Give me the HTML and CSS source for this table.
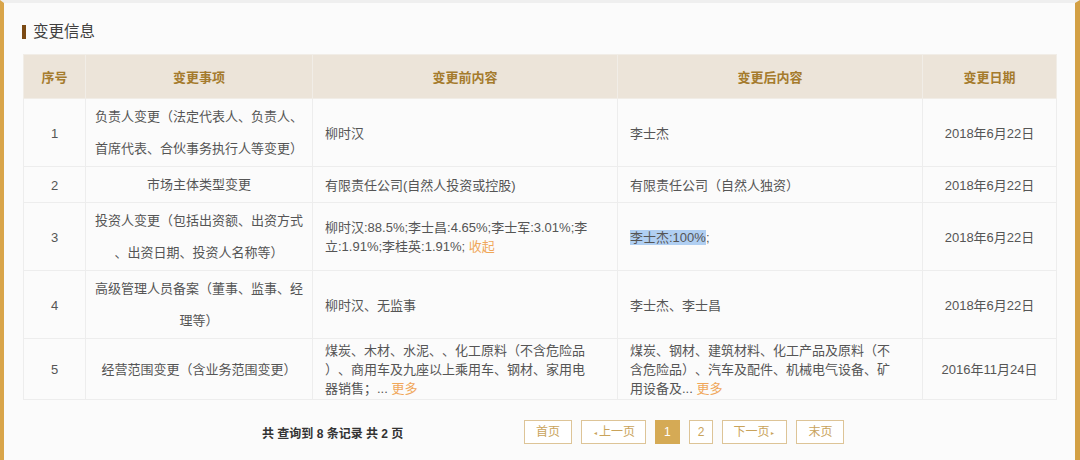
FILE: index.html
```html
<!DOCTYPE html>
<html lang="zh-CN">
<head>
  <meta charset="UTF-8">
  <meta name="viewport" content="width=device-width, initial-scale=1.0">
  <title>变更信息</title>
  <link rel="stylesheet" href="styles.css">
</head>
<body>
  <div class="page">
    <h2 class="title">变更信息</h2>

    <table class="changes">
      <thead>
        <tr>
          <th class="c-no">序号</th>
          <th class="c-item">变更事项</th>
          <th class="c-before">变更前内容</th>
          <th class="c-after">变更后内容</th>
          <th class="c-date">变更日期</th>
        </tr>
      </thead>
      <tbody>
        <tr>
          <td class="c-no">1</td>
          <td class="c-item">负责人变更（法定代表人、负责人、首席代表、合伙事务执行人等变更）</td>
          <td class="c-before">柳时汉</td>
          <td class="c-after">李士杰</td>
          <td class="c-date">2018年6月22日</td>
        </tr>
        <tr>
          <td class="c-no">2</td>
          <td class="c-item">市场主体类型变更</td>
          <td class="c-before">有限责任公司(自然人投资或控股)</td>
          <td class="c-after">有限责任公司（自然人独资）</td>
          <td class="c-date">2018年6月22日</td>
        </tr>
        <tr>
          <td class="c-no">3</td>
          <td class="c-item">投资人变更（包括出资额、出资方式、出资日期、投资人名称等）</td>
          <td class="c-before">柳时汉:88.5%;李士昌:4.65%;李士军:3.01%;李立:1.91%;李桂英:1.91%; <a class="more">收起</a></td>
          <td class="c-after"><span class="selected">李士杰:100%</span>;</td>
          <td class="c-date">2018年6月22日</td>
        </tr>
        <tr>
          <td class="c-no">4</td>
          <td class="c-item">高级管理人员备案（董事、监事、经理等）</td>
          <td class="c-before">柳时汉、无监事</td>
          <td class="c-after">李士杰、李士昌</td>
          <td class="c-date">2018年6月22日</td>
        </tr>
        <tr>
          <td class="c-no">5</td>
          <td class="c-item">经营范围变更（含业务范围变更）</td>
          <td class="c-before">煤炭、木材、水泥、、化工原料（不含危险品）、商用车及九座以上乘用车、钢材、家用电器销售；... <a class="more">更多</a></td>
          <td class="c-after">煤炭、钢材、建筑材料、化工产品及原料（不含危险品）、汽车及配件、机械电气设备、矿用设备及... <a class="more">更多</a></td>
          <td class="c-date">2016年11月24日</td>
        </tr>
      </tbody>
    </table>

    <div class="pager">
      <span class="pager-info">共 查询到 8 条记录 共 2 页</span>
      <div class="pager-links">
        <a class="pg">首页</a>
        <a class="pg step"><small>◂</small>上一页</a>
        <a class="pg num active">1</a>
        <a class="pg num">2</a>
        <a class="pg step">下一页<small>▸</small></a>
        <a class="pg">末页</a>
      </div>
    </div>
  </div>
</body>
</html>
```

FILE: styles.css
```css
body {
  margin: 0;
  padding: 0;
  background-color: #fbfbfb;
  font-family: "Liberation Sans", "Noto Sans CJK SC", sans-serif;
  color: #555;
}

.page {
  height: 457px;
  border-top: 3px solid #efefef;
  border-left: 4px solid #d9a54a;
  border-right: 5px solid #d3a044;
  padding: 0 19px;
  overflow: hidden;
}

.title {
  margin: 22px 0 0 -1px;
  padding-left: 7px;
  border-left: 4px solid #7b4a14;
  font-size: 15.5px;
  font-weight: normal;
  line-height: 14px;
  color: #3f3f3f;
}

.changes {
  width: 1033px;
  margin-top: 15px;
  border-collapse: collapse;
  table-layout: fixed;
  font-size: 13px;
  text-spacing-trim: space-all;
}

.changes th {
  height: 43px;
  padding: 0;
  background-color: #ece4d9;
  border: 1px solid #f1ede7;
  color: #a57b2d;
  font-weight: bold;
}

th.c-no { width: 61px; }
th.c-item { width: 226px; }
th.c-before { width: 304px; }
th.c-after { width: 304px; }
th.c-date { width: 133px; }

.changes td {
  padding: 2px 12px 1px;
  border: 1px solid #ededed;
  line-height: 19px;
  background-color: #fbfbfb;
}

.changes td.c-no,
.changes td.c-date {
  text-align: center;
}

.changes td.c-item {
  padding: 2px 4px 1px;
  line-height: 32px;
  text-align: center;
  line-break: anywhere;
}

.changes td.c-before,
.changes td.c-after {
  padding-right: 28px;
  line-break: anywhere;
}

.more {
  color: #f0a75a;
  cursor: pointer;
}

.selected {
  background-color: #b0cff2;
}

.pager {
  display: flex;
  align-items: center;
  margin-top: 20px;
}

.pager-info {
  width: 262px;
  margin-left: 239px;
  font-size: 12px;
  font-weight: bold;
  color: #333;
}

.pager-links {
  display: flex;
  gap: 9px;
}

.pg {
  height: 22px;
  padding: 0 11px;
  border: 1px solid #ddc497;
  background-color: #fff;
  font-size: 12px;
  line-height: 22px;
  color: #c9a35b;
  cursor: pointer;
}

.pg.step {
  padding: 0 10px;
}

.pg small {
  font-size: 6px;
  margin: 0 2px;
  vertical-align: 1px;
}

.pg.num {
  padding: 0 8px;
}

.pg.active {
  background-color: #d5aa55;
  border-color: #d5aa55;
  color: #fff;
}
```
